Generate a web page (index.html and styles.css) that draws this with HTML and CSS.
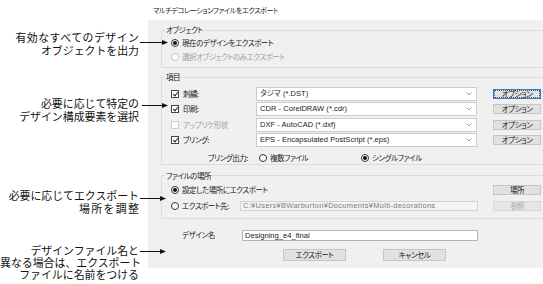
FILE: index.html
```html
<!DOCTYPE html>
<html lang="ja">
<head>
<meta charset="utf-8">
<title>マルチデコレーションファイルをエクスポート</title>
<link rel="stylesheet" href="styles.css">
</head>
<body>
<div class="page">
  <div class="callout c1"><span class="wide1">有効なすべてのデザイン</span><br>オブジェクトを出力</div>
  <div class="callout c2">必要に応じて特定の<br>デザイン構成要素を選択</div>
  <div class="callout c3">必要に応じてエクスポート<br><span class="wide2">場所を調整</span></div>
  <div class="callout c4">デザインファイル名と<br>異なる場合は、エクスポート<br>ファイルに名前をつける</div>

  <div class="dialog">
    <div class="title">マルチデコレーションファイルをエクスポート</div>
    <div class="panel">
      <fieldset class="group g1">
        <legend>オブジェクト</legend>
        <div class="gbody">
          <div class="opt"><span class="radio on"></span>現在のデザインをエクスポート</div>
          <div class="opt disabled"><span class="radio"></span>選択オブジェクトのみエクスポート</div>
        </div>
      </fieldset>

      <fieldset class="group g2">
        <legend>項目</legend>
        <div class="gbody">
          <div class="items">
            <div class="opt"><span class="box on"></span>刺繍:</div>
            <div class="combo"><span>タジマ (*.DST)</span><svg class="chev" viewBox="0 0 6 4"><polyline points="0.5,0.5 3,3 5.5,0.5"/></svg></div>
            <div class="btn focus"><span>オプション</span></div>

            <div class="opt"><span class="box on"></span>印刷:</div>
            <div class="combo"><span>CDR - CorelDRAW (*.cdr)</span><svg class="chev" viewBox="0 0 6 4"><polyline points="0.5,0.5 3,3 5.5,0.5"/></svg></div>
            <div class="btn"><span>オプション</span></div>

            <div class="opt disabled"><span class="box"></span>アップリケ形状</div>
            <div class="combo"><span>DXF - AutoCAD (*.dxf)</span><svg class="chev" viewBox="0 0 6 4"><polyline points="0.5,0.5 3,3 5.5,0.5"/></svg></div>
            <div class="btn"><span>オプション</span></div>

            <div class="opt"><span class="box on"></span>ブリング:</div>
            <div class="combo"><span>EPS - Encapsulated PostScript (*.eps)</span><svg class="chev" viewBox="0 0 6 4"><polyline points="0.5,0.5 3,3 5.5,0.5"/></svg></div>
            <div class="btn"><span>オプション</span></div>
          </div>
          <div class="output">
            <span class="out-label">ブリング出力:</span>
            <div class="opt multi"><span class="radio"></span>複数ファイル</div>
            <div class="opt"><span class="radio on"></span>シングルファイル</div>
          </div>
        </div>
      </fieldset>

      <fieldset class="group g3">
        <legend>ファイルの場所</legend>
        <div class="gbody">
          <div class="loc">
            <div class="opt span2"><span class="radio on"></span>設定した場所にエクスポート</div>
            <div class="btn"><span>場所</span></div>
            <div class="opt"><span class="radio"></span>エクスポート先:</div>
            <div class="path">C:¥Users¥BWarburton¥Documents¥Multi-decorations</div>
            <div class="btn off"><span>参照</span></div>
          </div>
        </div>
      </fieldset>

      <div class="name-row">
        <span class="name-label">デザイン名</span>
        <div class="textbox">Designing_e4_final</div>
      </div>

      <div class="actions">
        <div class="btn wide"><span>エクスポート</span></div>
        <div class="btn wide"><span>キャンセル</span></div>
      </div>
    </div>
  </div>

  <svg class="arrows" viewBox="0 0 543 284" width="543" height="284">
    <g stroke="#111" stroke-width="1">
      <line x1="140" y1="42.5" x2="163" y2="42.5"/>
      <line x1="142" y1="105.5" x2="163" y2="105.5"/>
      <line x1="140" y1="198.5" x2="161" y2="198.5"/>
      <line x1="140" y1="251.5" x2="161" y2="251.5"/>
    </g>
    <g fill="#111">
      <polygon points="168,42.5 162,40 162,45"/>
      <polygon points="168,105.5 162,103 162,108"/>
      <polygon points="166,198.5 160,196 160,201"/>
      <polygon points="166,251.5 160,249 160,254"/>
    </g>
  </svg>
</div>
</body>
</html>
```

FILE: styles.css
```css
html, body {
  margin: 0;
  padding: 0;
  background: #ffffff;
}

body {
  width: 543px;
  height: 284px;
  overflow: hidden;
  font-family: "Noto Sans CJK JP", "Noto Sans", sans-serif;
  color: #000;
}

.page {
  position: relative;
  width: 543px;
  height: 284px;
  display: grid;
  grid-template-columns: 148px 400px;
  overflow: hidden;
}

/* callouts */
.callout {
  position: absolute;
  left: 0;
  width: 139px;
  text-align: right;
  white-space: nowrap;
  font-size: 10.9px;
  line-height: 13px;
  color: #111;
}
.c1 { top: 31px; }
.c2 { top: 97px; line-height: 12.5px; }
.c3 { top: 189px; }
.c4 { top: 244px; line-height: 12px; }
.wide1 { letter-spacing: 0.5px; margin-right: -0.5px; }
.wide2 { letter-spacing: 1.4px; margin-right: -1.4px; }

.arrows {
  position: absolute;
  left: 0;
  top: 0;
  pointer-events: none;
}

/* dialog */
.dialog {
  grid-column: 2;
  font-size: 7.5px;
  letter-spacing: -0.45px;
  font-feature-settings: "palt";
  line-height: 10px;
  color: #1a1a1a;
}

.title {
  height: 20px;
  line-height: 20px;
  padding-left: 5px;
  font-size: 7.1px;
  letter-spacing: -0.4px;
  color: #222;
}

.panel {
  background: #f0f0f0;
  height: 248px;
  box-sizing: border-box;
  padding: 5px 0 0 13px;
  display: flex;
  flex-direction: column;
}

.group {
  margin: 0;
  padding: 0;
  border: 1px solid #dcdcdc;
  min-width: 0;
}
.group legend {
  font-size: 7.5px;
  line-height: 10px;
  height: 10px;
  padding: 0 1px;
  margin-left: 3px;
}

.g1 .gbody { padding: 1px 0 3px 8px; }
.g2 { margin-top: 4px; }
.g2 .gbody { padding: 5px 0 0 8px; }
.g3 { margin-top: 6px; }
.g3 .gbody { padding: 2px 0 5px 8px; }

.opt {
  display: flex;
  align-items: center;
  height: 14px;
  white-space: nowrap;
}
.opt.disabled { color: #a0a0a0; }

.radio {
  width: 8px;
  height: 8px;
  box-sizing: border-box;
  border: 1px solid #333;
  border-radius: 50%;
  background: #fff;
  margin: 0 3px 0 1px;
  display: flex;
  align-items: center;
  justify-content: center;
  flex: none;
}
.radio.on::after {
  content: "";
  width: 4px;
  height: 4px;
  border-radius: 50%;
  background: #111;
}
.disabled .radio { border-color: #c4c4c4; }

.box {
  width: 8px;
  height: 8px;
  box-sizing: border-box;
  border: 1px solid #444;
  background: #fff;
  margin: 0 4px 0 1px;
  flex: none;
  position: relative;
}
.box.on::after {
  content: "";
  position: absolute;
  left: 1.5px;
  top: 0px;
  width: 2px;
  height: 4px;
  border-right: 1px solid #222;
  border-bottom: 1px solid #222;
  transform: rotate(40deg);
}
.disabled .box { border-color: #cfcfcf; }

/* items grid */
.items {
  display: grid;
  grid-template-columns: 86px 221px 64px;
  grid-auto-rows: 14px;
  row-gap: 1.3px;
  align-items: center;
}
.items .btn { margin-left: 16px; }

.combo {
  height: 14px;
  box-sizing: border-box;
  border: 1px solid #cccccc;
  background: #fff;
  display: flex;
  align-items: center;
  justify-content: space-between;
  padding: 0 4px 0 3px;
  font-family: "Liberation Sans", Arial, "Noto Sans CJK JP", sans-serif;
  font-size: 7.5px;
  letter-spacing: 0.05px;
  white-space: nowrap;
}
.chev {
  width: 6px;
  height: 4px;
  fill: none;
  stroke: #888;
  stroke-width: 0.8;
}

.btn {
  height: 10px;
  box-sizing: border-box;
  background: #e1e1e1;
  border: 1px solid #c6c6c6;
  display: flex;
  align-items: center;
  justify-content: center;
  font-size: 7.5px;
  line-height: 8px;
  white-space: nowrap;
}
.btn.focus {
  border: 1px solid #2a7fd4;
  outline: 1px dotted #555;
  outline-offset: -2px;
}
.btn.off {
  color: #a8a8a8;
  background: #e6e6e6;
  border-color: #d6d6d6;
}

.output {
  display: flex;
  align-items: center;
  height: 12px;
  margin-top: 5px;
}
.out-label {
  width: 78px;
  text-align: right;
  white-space: nowrap;
}
.output .opt { height: 12px; }
.output .multi {
  margin-left: 10px;
  width: 102px;
}

/* location */
.loc {
  display: grid;
  grid-template-columns: 70px 238px 63px;
  grid-template-rows: 14px 14px;
  row-gap: 2px;
  align-items: center;
}
.loc .btn { margin-left: 15px; }
.span2 { grid-column: 1 / span 2; }
.path {
  height: 10px;
  box-sizing: border-box;
  border: 1px solid #d2d2d2;
  background: #f4f4f4;
  color: #7a7a7a;
  font-family: "Liberation Sans", sans-serif;
  font-size: 7.4px;
  letter-spacing: 0.35px;
  line-height: 8px;
  padding-left: 2px;
  white-space: nowrap;
  overflow: hidden;
}

/* name row */
.name-row {
  display: flex;
  align-items: center;
  height: 11px;
  margin-top: 11px;
  padding-left: 21px;
}
.name-label {
  width: 60px;
  white-space: nowrap;
}
.textbox {
  width: 236px;
  height: 11px;
  box-sizing: border-box;
  border: 1px solid #b4b4b4;
  background: #fff;
  font-family: "Liberation Sans", sans-serif;
  font-size: 7.6px;
  letter-spacing: 0;
  line-height: 9px;
  padding-left: 2px;
  white-space: nowrap;
}

.actions {
  display: flex;
  gap: 37px;
  margin-top: 8px;
  padding-left: 122px;
}
.btn.wide {
  width: 63px;
  height: 12px;
}
```
